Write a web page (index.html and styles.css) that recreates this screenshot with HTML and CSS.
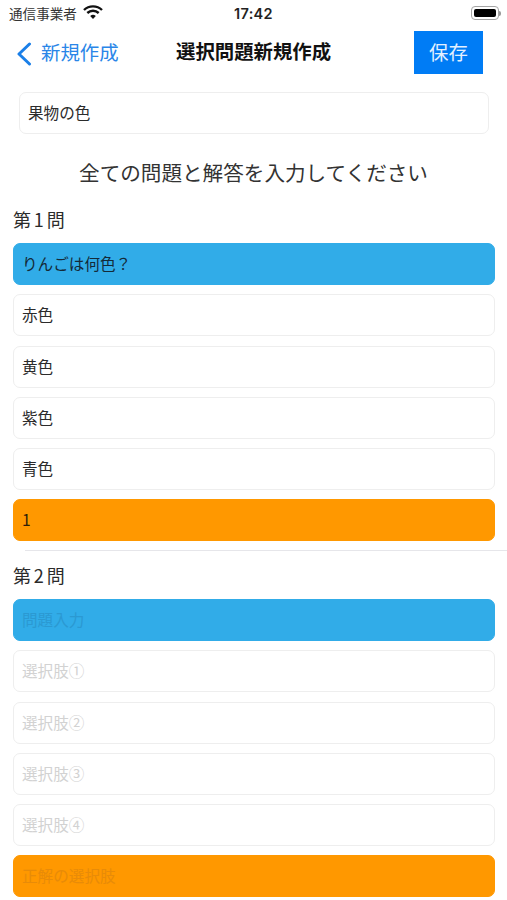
FILE: index.html
```html
<!DOCTYPE html>
<html lang="ja">
<head>
<meta charset="utf-8">
<title>選択問題新規作成</title>
<link rel="stylesheet" href="styles.css">
</head>
<body>
<div class="screen">
  <div class="status">
    <div class="status-left">
      <span class="carrier">通信事業者</span>
      <svg class="wifi" width="20" height="14" viewBox="0 0 20 14"><path d="M1 5a13 13 0 0 1 18 0" fill="none" stroke="#111" stroke-width="2.4"/><path d="M4.3 8a8.4 8.4 0 0 1 11.4 0" fill="none" stroke="#111" stroke-width="2.4"/><path d="M7.2 11a4 4 0 0 1 5.6 0L10 14z" fill="#111"/></svg>
    </div>
    <span class="time">17:42</span>
    <div class="battery"><span class="battery-body"><span class="battery-fill"></span></span><span class="battery-cap"></span></div>
  </div>
  <div class="nav">
    <div class="back">
      <svg width="16" height="24" viewBox="0 0 16 24"><path d="M13.5 2 3 12l10.5 10" fill="none" stroke="#1a7fe8" stroke-width="3" stroke-linecap="round" stroke-linejoin="round"/></svg>
      <span class="back-label">新規作成</span>
    </div>
    <div class="nav-title">選択問題新規作成</div>
    <div class="save">保存</div>
  </div>
  <div class="title-wrap"><div class="field">果物の色</div></div>
  <div class="prompt">全ての問題と解答を入力してください</div>
  <section class="question">
    <div class="q-label">第 1 問</div>
    <div class="fields">
      <div class="field blue">りんごは何色？</div>
      <div class="field">赤色</div>
      <div class="field">黄色</div>
      <div class="field">紫色</div>
      <div class="field">青色</div>
      <div class="field orange">1</div>
    </div>
  </section>
  <div class="separator"></div>
  <section class="question">
    <div class="q-label">第 2 問</div>
    <div class="fields">
      <div class="field blue ph-blue">問題入力</div>
      <div class="field ph">選択肢①</div>
      <div class="field ph">選択肢②</div>
      <div class="field ph">選択肢③</div>
      <div class="field ph">選択肢④</div>
      <div class="field orange ph-orange">正解の選択肢</div>
    </div>
  </section>
</div>
</body>
</html>
```
FILE: styles.css
```css
* { box-sizing: border-box; }
html, body { margin: 0; padding: 0; background: #fff; }
body {
  font-family: "Noto Sans CJK JP", "Liberation Sans", sans-serif;
  color: #222;
}
.screen { width: 507px; height: 900px; overflow: hidden; background: #fff; }

.status {
  height: 26px;
  padding: 0 6px 0 9px;
  display: grid;
  grid-template-columns: 1fr auto 1fr;
  align-items: center;
}
.status-left { display: flex; align-items: center; gap: 6px; }
.carrier { font-size: 13.6px; color: #333; }
.wifi { margin-top: -2px; }
.time { font-family: "Inter", "Liberation Sans", sans-serif; font-size: 14.5px; font-weight: 600; color: #222; letter-spacing: 0.3px; margin-right: 3px; }
.battery { justify-self: end; display: flex; align-items: center; }
.battery-body {
  width: 28px; height: 14px; padding: 2px;
  border: 1px solid #a5a5a5; border-radius: 4px;
  display: block;
}
.battery-fill { display: block; height: 100%; background: #000; border-radius: 2px; }
.battery-cap { width: 2px; height: 5px; background: #999; border-radius: 0 2px 2px 0; }

.nav {
  height: 47px;
  margin-top: 4px;
  padding: 0 24px 0 16px;
  display: flex;
  align-items: center;
  position: relative;
}
.back { display: flex; align-items: center; gap: 9px; color: #2a86e8; font-size: 19.4px; }
.back-label { margin-top: -5px; }
.nav-title {
  position: absolute;
  left: 176px;
  top: 7px;
  font-size: 19.4px;
  font-weight: 700;
  line-height: 28px;
  color: #111;
}
.save {
  margin-left: auto;
  width: 69px;
  height: 43px;
  margin-top: -3px;
  padding-bottom: 2px;
  background: #007cf5;
  color: #e4f0ff;
  font-size: 19.4px;
  display: flex;
  align-items: center;
  justify-content: center;
}

.title-wrap { padding: 15px 18px 0 19px; }
.field {
  height: 42px;
  padding: 0 8px 2px;
  display: flex;
  align-items: center;
  background: #fff;
  border: 1px solid #eeeeee;
  border-radius: 7px;
  font-size: 15.6px;
  color: #2b2b2b;
}
.prompt {
  margin-top: 23px;
  height: 30px;
  line-height: 30px;
  text-align: center;
  font-size: 20.6px;
  color: #333;
}
.question { padding: 0 12px 0 13px; }
.q-label {
  margin-top: 19px;
  height: 26px;
  line-height: 26px;
  font-size: 18px;
  color: #2b2b2b;
  word-spacing: -1.2px;
}
.separator + .question .q-label { margin-top: 10.5px; }
.fields { display: flex; flex-direction: column; gap: 9.3px; margin-top: 11px; }
.blue { background: #31ace8; border-color: #31ace8; color: #142a38; }
.orange { background: #ff9800; border-color: #ff9800; color: #2e1f08; }
.ph { color: #d2d2d2; }
.ph-blue { color: #2b99d2; }
.ph-orange { color: #e88b08; }
.separator { height: 1px; margin: 9px 0 0 25px; background: #e6e6ea; }
```
